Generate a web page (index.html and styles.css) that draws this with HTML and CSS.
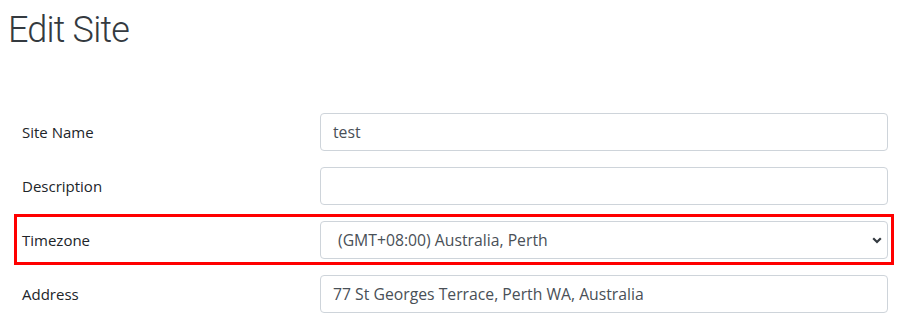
FILE: index.html
```html
<!DOCTYPE html>
<html lang="en">
<head>
  <meta charset="UTF-8">
  <title>Edit Site</title>
  <link rel="stylesheet" href="styles.css">
</head>
<body>
  <h1 class="page-title">Edit Site</h1>
  <form class="site-form">
    <div class="form-row">
      <label for="siteName">Site Name</label>
      <input type="text" id="siteName" class="form-control" value="test">
    </div>
    <div class="form-row">
      <label for="description">Description</label>
      <input type="text" id="description" class="form-control">
    </div>
    <div class="form-row highlight">
      <label for="timezone">Timezone</label>
      <div class="select-wrap">
        <select id="timezone" class="form-control custom-select">
          <option>(GMT+08:00) Australia, Perth</option>
        </select>
        <svg class="select-arrow" width="10" height="7" viewBox="0 0 10 7">
          <path d="M1.2 1.2 L5 5 L8.8 1.2" fill="none" stroke="#343a40" stroke-width="2.2"/>
        </svg>
      </div>
    </div>
    <div class="form-row">
      <label for="address">Address</label>
      <input type="text" id="address" class="form-control" value="77 St Georges Terrace, Perth WA, Australia">
    </div>
  </form>
</body>
</html>
```

FILE: styles.css
```css
* {
  box-sizing: border-box;
}
body {
  margin: 0;
  padding: 0 8px;
  background: #fff;
  font-family: "Open Sans", "Noto Sans", sans-serif;
  color: #212529;
}
.page-title {
  margin: 9px 0 0;
  font-family: Roboto, sans-serif;
  font-weight: 300;
  font-size: 36px;
  line-height: 43px;
  letter-spacing: -0.8px;
  color: #343a40;
}
.site-form {
  margin: 54px 0 0 6px;
  width: 880px;
  display: flex;
  flex-direction: column;
  gap: 3px;
}
.form-row {
  display: flex;
  align-items: center;
  border: 3px solid transparent;
  padding: 4px 3px 3px 5px;
}
.form-row.highlight {
  border-color: #ff0000;
}
.form-row label {
  width: 298px;
  flex-shrink: 0;
  font-size: 15px;
}
.form-control {
  flex: 1;
  width: 100%;
  height: 38px;
  padding: 0 12px;
  border: 1px solid #ced4da;
  border-radius: 4px;
  font-family: inherit;
  font-size: 15.75px;
  color: #495057;
  background: #fff;
}
.select-wrap {
  flex: 1;
  position: relative;
}
.custom-select {
  appearance: none;
  -webkit-appearance: none;
  padding-left: 17px;
}
.select-arrow {
  position: absolute;
  right: 6px;
  top: 16px;
}
```
